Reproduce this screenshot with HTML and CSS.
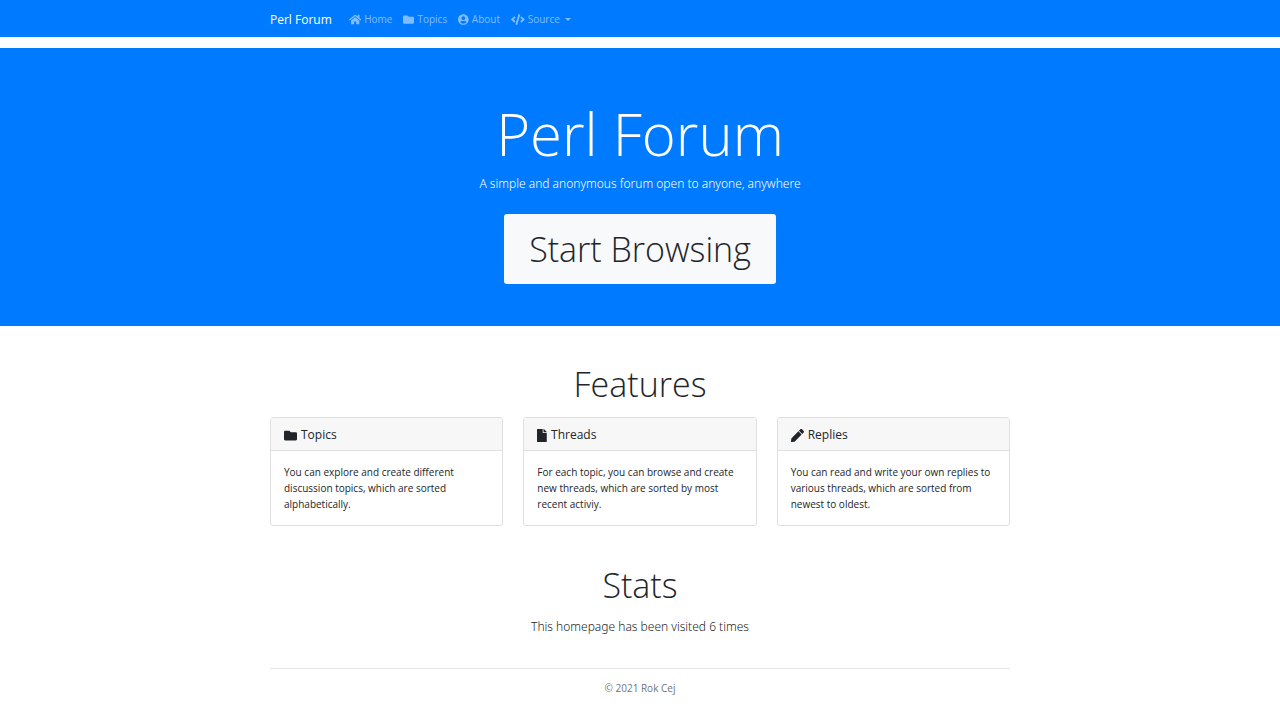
FILE: index.html
```html
<!DOCTYPE html>
<html lang="en">
<head>
<meta charset="utf-8">
<meta name="viewport" content="width=device-width, initial-scale=1">
<title>Perl Forum</title>
<link rel="stylesheet" href="styles.css">
</head>
<body>
<header class="navbar">
  <div class="container navbar-inner">
    <a class="brand" href="#">Perl Forum</a>
    <nav class="nav-links">
      <a class="nav-link" href="#"><svg class="icon" viewBox="0 0 576 512" aria-hidden="true"><path d="M280.37 148.26L96 300.11V464a16 16 0 0 0 16 16l112.06-.29a16 16 0 0 0 15.92-16V368a16 16 0 0 1 16-16h64a16 16 0 0 1 16 16v95.64a16 16 0 0 0 16 16.05L464 480a16 16 0 0 0 16-16V300L295.67 148.26a12.19 12.19 0 0 0-15.3 0zM571.6 251.47L488 182.56V44.05a12 12 0 0 0-12-12h-56a12 12 0 0 0-12 12v72.61L318.47 43a48 48 0 0 0-61 0L4.34 251.47a12 12 0 0 0-1.6 16.9l25.5 31A12 12 0 0 0 45.15 301l235.22-193.74a12.19 12.19 0 0 1 15.3 0L530.9 301a12 12 0 0 0 16.9-1.6l25.5-31a12 12 0 0 0-1.7-16.93z"/></svg>Home</a>
      <a class="nav-link" href="#"><svg class="icon" viewBox="0 0 512 512" aria-hidden="true"><path d="M464 128H272l-64-64H48C21.49 64 0 85.49 0 112v288c0 26.51 21.49 48 48 48h416c26.51 0 48-21.49 48-48V176c0-26.51-21.49-48-48-48z"/></svg>Topics</a>
      <a class="nav-link" href="#"><svg class="icon" viewBox="0 0 496 512" aria-hidden="true"><path d="M248 8C111 8 0 119 0 256s111 248 248 248 248-111 248-248S385 8 248 8zm0 96c48.6 0 88 39.4 88 88s-39.4 88-88 88-88-39.4-88-88 39.4-88 88-88zm0 344c-58.7 0-111.3-26.6-146.5-68.2 18.8-35.4 55.6-59.8 98.5-59.8 2.4 0 4.8.4 7.1 1.1 13 4.2 26.6 6.9 40.9 6.9 14.3 0 28-2.7 40.9-6.9 2.3-.7 4.7-1.1 7.1-1.1 42.9 0 79.7 24.4 98.5 59.8C359.3 421.4 306.7 448 248 448z"/></svg>About</a>
      <button class="nav-link" type="button" aria-haspopup="true"><svg class="icon" viewBox="0 0 640 512" aria-hidden="true"><path d="M278.9 511.5l-61-17.7c-6.4-1.8-10-8.5-8.2-14.9L346.2 8.7c1.8-6.4 8.5-10 14.9-8.2l61 17.7c6.4 1.8 10 8.5 8.2 14.9L293.8 503.3c-1.9 6.4-8.5 10.1-14.9 8.2zm-114-112.2l43.5-46.4c4.6-4.9 4.3-12.7-.8-17.2L117 256l90.6-79.7c5.1-4.5 5.5-12.3.8-17.2l-43.5-46.4c-4.5-4.8-12.1-5.1-17-.5L3.8 247.2c-5.1 4.7-5.1 12.8 0 17.5l144.1 135.1c4.9 4.6 12.5 4.4 17-.5zm327.2.6l144.1-135.1c5.1-4.7 5.1-12.8 0-17.5L492.1 112.1c-4.8-4.5-12.4-4.3-17 .5L431.6 159c-4.6 4.9-4.3 12.7.8 17.2L523 256l-90.6 79.7c-5.1 4.5-5.5 12.3-.8 17.2l43.5 46.4c4.5 4.9 12.1 5.1 17 .6z"/></svg>Source<span class="caret"></span></button>
    </nav>
  </div>
</header>

<section class="hero">
  <h1 class="hero-title">Perl Forum</h1>
  <p class="lead">A simple and anonymous forum open to anyone, anywhere</p>
  <a class="hero-button" href="#">Start Browsing</a>
</section>

<main class="container">
  <section class="features">
    <h2 class="section-title">Features</h2>
    <div class="cards">
      <article class="card">
        <h3 class="card-header"><svg class="icon icon-large" viewBox="0 0 512 512" aria-hidden="true"><path d="M464 128H272l-64-64H48C21.49 64 0 85.49 0 112v288c0 26.51 21.49 48 48 48h416c26.51 0 48-21.49 48-48V176c0-26.51-21.49-48-48-48z"/></svg>Topics</h3>
        <p class="card-body">You can explore and create different discussion topics, which are sorted alphabetically.</p>
      </article>
      <article class="card">
        <h3 class="card-header"><svg class="icon icon-large" viewBox="0 0 384 512" aria-hidden="true"><path d="M224 136V0H24C10.7 0 0 10.7 0 24v464c0 13.3 10.7 24 24 24h336c13.3 0 24-10.7 24-24V160H248c-13.2 0-24-10.8-24-24zm160-14.1v6.1H256V0h6.1c6.4 0 12.5 2.5 17 7l97.9 98c4.5 4.5 7 10.6 7 16.9z"/></svg>Threads</h3>
        <p class="card-body">For each topic, you can browse and create new threads, which are sorted by most recent activiy.</p>
      </article>
      <article class="card">
        <h3 class="card-header"><svg class="icon icon-large" viewBox="0 0 512 512" aria-hidden="true"><path d="M290.74 93.24l128.02 128.02-277.99 277.99-114.14 12.6C11.35 513.54-1.56 500.62.14 485.34l12.7-114.22 277.9-277.88zm207.2-19.06l-60.11-60.11c-18.75-18.75-49.16-18.75-67.91 0l-56.55 56.55 128.02 128.02 56.55-56.55c18.75-18.76 18.75-49.16 0-67.91z"/></svg>Replies</h3>
        <p class="card-body">You can read and write your own replies to various threads, which are sorted from newest to oldest.</p>
      </article>
    </div>
  </section>

  <section class="stats">
    <h2 class="section-title">Stats</h2>
    <p class="lead">This homepage has been visited 6 times</p>
  </section>

  <footer class="footer">© 2021 Rok Cej</footer>
</main>
</body>
</html>
```
FILE: styles.css
```css
* {
  box-sizing: border-box;
}

body {
  margin: 0;
  background: #fff;
  color: #212529;
  font-family: "Segoe UI", "Open Sans", "Noto Sans", sans-serif;
  font-size: 10px;
  line-height: 16px;
}

h1, h2, h3, p {
  margin: 0;
}

.container {
  width: 100%;
  max-width: 760px;
  margin: 0 auto;
  padding: 0 10px;
}

.icon {
  height: 11px;
  flex: none;
  fill: currentColor;
}

.icon-large {
  height: 13px;
}

.navbar {
  background: #007bff;
  padding: 9px 0 7px;
  margin-bottom: 11px;
}

.navbar-inner {
  display: flex;
  align-items: center;
  gap: 17px;
  line-height: 21px;
}

.brand {
  color: #fff;
  font-size: 12px;
  text-decoration: none;
}

.nav-links {
  display: flex;
  align-items: center;
  gap: 11px;
}

.nav-link {
  display: flex;
  align-items: center;
  gap: 3px;
  padding: 0;
  border: 0;
  background: none;
  color: rgba(255, 255, 255, 0.5);
  font: inherit;
  text-decoration: none;
}

.caret {
  margin-left: 2px;
  border-top: 3px solid;
  border-left: 3px solid transparent;
  border-right: 3px solid transparent;
}

.hero {
  display: flex;
  flex-direction: column;
  align-items: center;
  padding: 48px 10px 42px;
  background: #007bff;
  color: #fff;
  text-align: center;
}

.hero-title {
  margin-bottom: 2px;
  font-size: 58px;
  font-weight: 300;
  line-height: 76px;
}

.lead {
  font-family: "Segoe UI", "Noto Sans", "Open Sans", sans-serif;
  font-size: 12px;
  font-weight: 300;
  line-height: 20px;
}

.hero-button {
  margin-top: 20px;
  padding: 11px 25px;
  border-radius: 3px;
  background: #f8f9fa;
  color: #212529;
  font-size: 34px;
  font-weight: 300;
  line-height: 48px;
  text-decoration: none;
}

.features {
  padding-top: 34px;
}

.section-title {
  margin-bottom: 9px;
  font-size: 34px;
  font-weight: 300;
  line-height: 48px;
  text-align: center;
}

.cards {
  display: grid;
  grid-template-columns: repeat(3, 1fr);
  gap: 20px;
}

.card {
  border: 1px solid #dfdfdf;
  border-radius: 3px;
}

.card-header {
  display: flex;
  align-items: center;
  gap: 4px;
  padding: 9px 13px 7px;
  border-bottom: 1px solid #dfdfdf;
  background: #f7f7f7;
  font-size: 12px;
  font-weight: 400;
}

.card-body {
  padding: 13px;
}

.stats {
  padding: 35px 0 31px;
  text-align: center;
}

.stats .section-title {
  margin-bottom: 8px;
}

.footer {
  padding: 11px 0 24px;
  border-top: 1px solid #e5e5e5;
  color: #6c757d;
  text-align: center;
}
```
